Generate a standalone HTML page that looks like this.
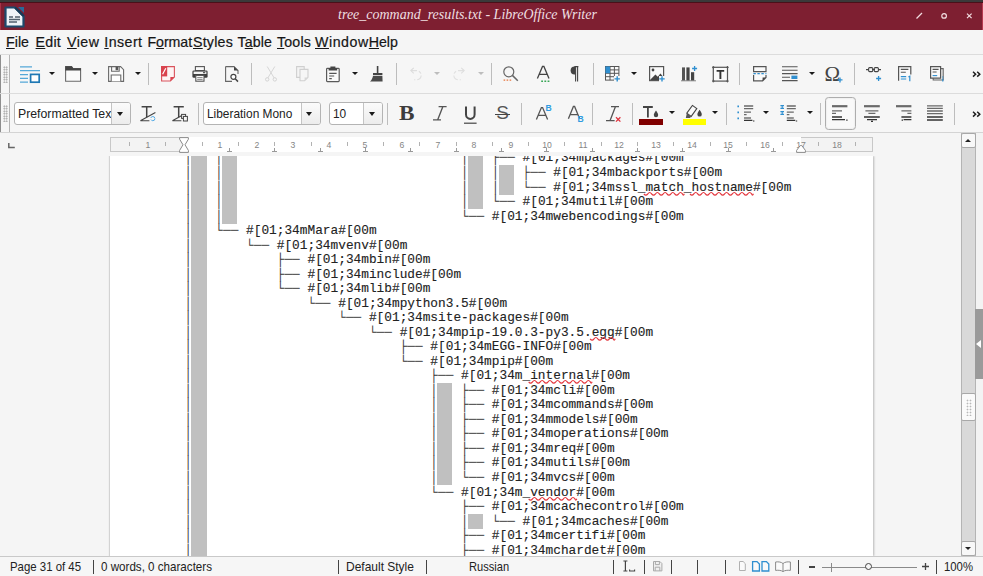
<!DOCTYPE html>
<html><head><meta charset="utf-8"><title>tree_command_results.txt - LibreOffice Writer</title>
<style>
html,body{margin:0;padding:0;}
body{width:983px;height:576px;overflow:hidden;position:relative;background:#f5f5f5;font-family:"Liberation Sans","DejaVu Sans",sans-serif;color:#222;}
#top{position:absolute;left:0;top:0;width:983px;height:3px;background:#3a3a3a;}
#top2{position:absolute;left:0;top:2px;width:983px;height:1px;background:#4a1019;}
#title{position:absolute;left:0;top:3px;width:983px;height:26.500px;background:#7e1f31;box-shadow:inset 1px 0 0 #a83348,inset -1px 0 0 #b53a50;}
#title .t{position:absolute;left:267.5px;top:-0.5px;width:400px;height:22px;line-height:22px;text-align:center;color:#efdfe1;font-family:"Liberation Serif","DejaVu Serif",serif;font-style:italic;font-size:15.200px;white-space:nowrap;}
#title .t b{display:inline-block;font-weight:normal;transform:scaleX(.921);transform-origin:50% 50%;}
#title .wc{position:absolute;top:4px;color:#e8d8da;font-size:11px;line-height:16px;}
#menu{position:absolute;left:0;top:29.500px;width:983px;height:24.500px;background:#f5f5f5;}
#menu span{position:absolute;top:2.8px;font-size:14.2px;line-height:20px;white-space:nowrap;color:#161616;-webkit-text-stroke:0.2px #161616;}
#menu u{text-decoration:underline;text-underline-offset:1.2px;text-decoration-thickness:1px;}
.tbar{position:absolute;left:0;width:983px;background:#f6f6f6;border-top:1px solid #dcdcdc;}
#tb1{top:54px;height:39px;}
#tb2{top:93px;height:38px;border-bottom:1px solid #d4d4d4;}
.grip{position:absolute;left:0;top:0;width:10px;height:100%;border-left:1.5px solid #8e8e8e;border-right:1px solid #b4b4b4;box-sizing:border-box;}
.grip:before{content:"";position:absolute;left:1.5px;top:11px;width:5px;height:17px;background-image:radial-gradient(#9a9a9a 0.7px,transparent 1px);background-size:2.5px 2.5px;}
.sep{position:absolute;width:1px;background:#bdbdbd;}
.ic{position:absolute;overflow:visible;}
.dd{position:absolute;width:0;height:0;margin-left:.5px;border-left:3px solid transparent;border-right:3px solid transparent;border-top:3.4px solid #1a1a1a;}
.dd.g{border-top-color:#bdbdbd;}
.combo{position:absolute;top:9px;height:22px;box-sizing:border-box;border:1px solid #b4b4b4;border-radius:3px;background:#fff;font-size:13px;line-height:20px;color:#222;overflow:hidden;white-space:nowrap;}
.combo .b{position:absolute;right:0;top:0;width:18px;height:100%;background:linear-gradient(#fbfbfb,#ececec);border-left:1px solid #c4c4c4;}
.combo .b:after{content:"";position:absolute;left:4.5px;top:8.5px;border-left:3.6px solid transparent;border-right:3.6px solid transparent;border-top:4px solid #1a1a1a;}
.combo .x{position:absolute;left:3.2px;top:0.5px;transform:scaleX(.915);transform-origin:0 50%;}
i{font-style:normal;display:block}
.gl{position:absolute;color:#3c3c3c;white-space:nowrap;}
.selbtn{position:absolute;box-sizing:border-box;border:1px solid #adadad;border-radius:3.5px;background:#f9f9f9;box-shadow:inset 0 0 2px rgba(0,0,0,.12);}
#rulerrow{position:absolute;left:0;top:133px;width:961px;height:23px;background:#f5f5f5;}
#ruler{position:absolute;left:110px;top:4px;width:763px;height:15px;background:#fff;}
#ruler .ml{position:absolute;left:0;top:0;width:73px;height:15px;box-sizing:border-box;border:1px solid #c8c8c8;border-right:none;background:#f3f3f3;}
#ruler .mr{position:absolute;left:691px;top:0;width:72px;height:15px;box-sizing:border-box;border:1px solid #c8c8c8;border-left:none;background:#f3f3f3;}
.rn{position:absolute;top:1.5px;width:20px;margin-left:-10px;text-align:center;font-size:9.6px;line-height:12px;color:#858585;transform:scaleX(.9);}
.rt{position:absolute;top:5px;width:1px;height:4px;margin-left:-.5px;background:#b2b2b2;}
.tb{position:absolute;top:11px;width:5px;height:4px;border-bottom:1px solid #9a9a9a;box-sizing:border-box;}
.tb:after{content:"";position:absolute;left:2px;top:0;width:1px;height:4px;background:#9a9a9a;}
#doc{position:absolute;left:0;top:156px;width:961px;height:400px;background:#f5f5f5;overflow:hidden;}
#page{position:absolute;left:110px;top:0;width:763px;height:400px;background:#fff;box-shadow:1px 0 2px rgba(0,0,0,.25),-1px 0 1px rgba(0,0,0,.12);}
.ln{position:absolute;left:184.6px;height:14.5px;line-height:14.5px;font-family:"Liberation Mono","DejaVu Sans Mono",monospace;font-size:12.8px;white-space:pre;color:#222;-webkit-text-stroke:0.12px #222;}
.bx{color:#383838;-webkit-text-stroke:0;}
.nb{background:#c0c0c0;position:relative;left:-1px;}
.wv{text-decoration:underline wavy #e03030;text-decoration-thickness:0.8px;text-underline-offset:2px;}
#vs{position:absolute;left:961px;top:133px;width:15px;height:423px;background:#d9d9d9;border-left:1px solid #b4b4b4;border-right:1px solid #b4b4b4;box-sizing:border-box;}
#vs .btn{position:absolute;left:-1px;width:15px;height:15px;background:#f8f8f8;border:1px solid #a8a8a8;border-radius:2px;box-sizing:border-box;}
#vs .btn:after{content:"";position:absolute;left:3px;top:4.5px;border-left:3.4px solid transparent;border-right:3.4px solid transparent;border-bottom:3.8px solid #222;}
#vs .btn.dn:after{border-bottom:none;border-top:3.8px solid #222;top:5px;}
#vs .thumb{position:absolute;left:-1px;top:259.5px;width:14.5px;height:28.500px;background:#fafafa;border:1px solid #a8a8a8;border-radius:2px;box-sizing:border-box;}
#vs .thumb:after{content:"";position:absolute;left:3.5px;top:5px;width:6px;height:17px;background-image:radial-gradient(#b8b8b8 0.8px,transparent 1.1px);background-size:3px 3px;}
#side{position:absolute;left:976px;top:133px;width:7px;height:423px;background:#f3f3f3;}
#side .h{position:absolute;left:-1px;top:176px;width:8px;height:70px;background:#9a9a9a;}
#side .h:after{content:"";position:absolute;left:1px;top:31px;border-top:4px solid transparent;border-bottom:4px solid transparent;border-right:5px solid #fff;}
#status{position:absolute;left:0;top:556px;width:983px;height:20px;background:#f6f6f6;border-top:1px solid #c9c9c9;box-sizing:border-box;font-size:12.4px;}
#status span{position:absolute;top:3px;line-height:15px;white-space:nowrap;color:#222;transform:scaleX(.925);transform-origin:0 50%;}
#status .s{position:absolute;top:3px;width:1px;height:14px;background:#444;}
</style></head><body>
<div id="top"></div><div id="top2"></div>
<div id="title">
<svg class="ic" style="left:4px;top:3px" width="21" height="22" viewBox="0 0 21 22"><path d="M1.5 1.5h9.500l8.500 8.500v10.500h-18z" fill="#eef3f8" stroke="#1d4a6c" stroke-width="2.2" stroke-linejoin="round"/><path d="M11 1.500l8.500 8.500z" stroke="#163a58" stroke-width="2.400"/><path d="M14 1l6 6v-6z" fill="#2a6a9a"/><path d="M5 11h4M11 11h5M5 13.5h11M5 16h8" stroke="#51606e" stroke-width="1.5"/></svg>
<div class="t"><b>tree_command_results.txt - LibreOffice Writer</b></div>
<svg class="ic" style="left:910px;top:7px" width="66" height="12" viewBox="0 0 66 12"><g fill="none" stroke="#f2dde0" stroke-width="1.2"><path d="M6.500 8.500l5.500-5.500"/><circle cx="34.100" cy="5.900" r="2.300"/><path d="M57 3.600l4.600 4.600M61.600 3.600l-4.600 4.600"/></g></svg>
</div>
<div id="menu">
<span style="left:6px;letter-spacing:0.03px"><u>F</u>ile</span><span style="left:35.6px;letter-spacing:0.24px"><u>E</u>dit</span><span style="left:67px;letter-spacing:0.5px"><u>V</u>iew</span><span style="left:104.3px;letter-spacing:0.44px"><u>I</u>nsert</span><span style="left:147.5px;letter-spacing:-0.07px">F<u>o</u>rmat</span><span style="left:193px;letter-spacing:0.23px"><u>S</u>tyles</span><span style="left:237.5px;letter-spacing:0.12px">T<u>a</u>ble</span><span style="left:277px;letter-spacing:0.18px"><u>T</u>ools</span><span style="left:315px;letter-spacing:0.56px"><u>W</u>indow</span><span style="left:368.8px;letter-spacing:-0.04px"><u>H</u>elp</span>
</div>
<div id="tb1" class="tbar"><div class="grip"></div>
<svg class="ic" style="left:19.7px;top:11.0px" width="20" height="17" viewBox="0 0 20 17"><path d="M0 0.8h12M0 4.6h20" stroke="#55a8d8" stroke-width="1.3"/><path d="M0 8.6h8M0 12.4h8M0 16.2h8" stroke="#55a8d8" stroke-width="1.3"/><rect x="10.6" y="8.4" width="8.6" height="7.8" fill="#fff" stroke="#1f78b4" stroke-width="1.7"/></svg>
<i class="dd" style="left:48.0px;top:16.5px"></i>
<svg class="ic" style="left:64.8px;top:11.0px" width="16.2" height="16" viewBox="0 0 16.2 16"><path d="M0.6 15.2V0.6h6l1.4 2h7.6v12.6z" fill="#fafafa" stroke="#6a6a6a" stroke-width="1.1"/><path d="M0.3 0.3h6.4l1.5 2h7.7v2.2h-15.6z" fill="#444"/></svg>
<i class="dd" style="left:91.0px;top:16.5px"></i>
<svg class="ic" style="left:108.3px;top:11.0px" width="16.2" height="16" viewBox="0 0 16.2 16"><path d="M0.6 0.6h12l3 3v11.8h-15z" fill="#fafafa" stroke="#6a6a6a" stroke-width="1.1"/><path d="M3.6 0.6v4.6h7.6v-4.6" fill="none" stroke="#6a6a6a" stroke-width="1.1"/><rect x="7.6" y="0.8" width="2.6" height="3.4" fill="#555"/><path d="M3.2 15.4v-6.4h9.6v6.4" fill="#fff" stroke="#6a6a6a" stroke-width="1.1"/></svg>
<i class="dd" style="left:134.0px;top:16.5px"></i>
<i class="sep" style="left:148.0px;top:8.0px;height:22.0px"></i>
<svg class="ic" style="left:161.0px;top:11.0px" width="14.2" height="16" viewBox="0 0 14.2 16"><path d="M5 0.6h8.4v10.4l-4 4h-8.8v-5" fill="#fdf4f4" stroke="#d9535c" stroke-width="1.1"/><path d="M13.4 11h-4v4z" fill="#d9434e"/><rect x="0" y="0" width="6.2" height="10.4" fill="#d9434e"/><path d="M1.6 8.2l3.2-6" stroke="#fff" stroke-width="1.2"/></svg>
<svg class="ic" style="left:192.0px;top:11.0px" width="16" height="16" viewBox="0 0 16 16"><rect x="3.4" y="0.6" width="9" height="4" fill="#fafafa" stroke="#555" stroke-width="1.1"/><rect x="0.4" y="4.4" width="15.2" height="7.4" rx="1.4" fill="#3e3e3e"/><rect x="1.6" y="5.6" width="12.8" height="2.4" fill="#f2f2f2"/><rect x="11" y="6.2" width="2.2" height="1" fill="#333"/><rect x="3.8" y="9.4" width="8.2" height="5.8" fill="#fafafa" stroke="#555" stroke-width="1.1"/><path d="M5.2 11.6h5.4M5.2 13.4h5.4" stroke="#777" stroke-width=".9"/></svg>
<svg class="ic" style="left:224.8px;top:11.0px" width="14" height="16" viewBox="0 0 14 16"><path d="M0.6 0.6h8.4l4 4v3.4M7 15.4h-6.4v-14.8" fill="none" stroke="#666" stroke-width="1.1"/><path d="M9 0.6l4 4h-4z" fill="#444"/><circle cx="8.4" cy="10.8" r="2.5" fill="#fff" stroke="#444" stroke-width="1.2"/><path d="M10.2 12.8l2.8 2.8" stroke="#444" stroke-width="1.5"/></svg>
<i class="sep" style="left:250.5px;top:8.0px;height:22.0px"></i>
<svg class="ic" style="left:264.7px;top:11.0px" width="12" height="16" viewBox="0 0 12 16"><path d="M2.2 0.5l7 11.5M9.8 0.5l-7 11.5" stroke="#d6d6d6" stroke-width="1" fill="none"/><circle cx="2.2" cy="13.4" r="1.7" fill="none" stroke="#d4d4d4" stroke-width="1"/><circle cx="9.8" cy="13.4" r="1.7" fill="none" stroke="#d4d4d4" stroke-width="1"/></svg>
<svg class="ic" style="left:296.0px;top:11.0px" width="12.6" height="15.4" viewBox="0 0 12.6 15.4"><path d="M0.6 0.6h7.6v10.8h-7.6z" fill="#f4f4f4" stroke="#cfcfcf" stroke-width="1.1"/><path d="M4 3.4h8v8l-3.4 3.4h-4.6z" fill="#f6f6f6" stroke="#cfcfcf" stroke-width="1.1"/><path d="M12 11.4h-3.4v3.4z" fill="#d6d6d6"/></svg>
<svg class="ic" style="left:326.0px;top:10.7px" width="13.8" height="16.3" viewBox="0 0 13.8 16.3"><rect x="0.6" y="2.4" width="12.6" height="13.2" rx="0.8" fill="#fafafa" stroke="#5a5a5a" stroke-width="1.2"/><path d="M2.6 4.6V2.2h1.8v-1.6h5v1.6h1.8v2.4z" fill="#444"/><path d="M3.2 7.4h7.4M3.2 10h5M3.2 12.6h2.6" stroke="#555" stroke-width="1.1"/></svg>
<i class="dd" style="left:351.1px;top:16.5px"></i>
<svg class="ic" style="left:370.0px;top:11.0px" width="12.8" height="15.8" viewBox="0 0 12.8 15.8"><path d="M7.6 0v7.4" stroke="#444" stroke-width="1.6"/><path d="M3 7h9.4v2.2h-9.4z" fill="#444"/><path d="M3 10h9.4l0.2 5.6h-12.6c1.6-1.4 2.6-3.4 3-5.6z" fill="#4a4a4a"/></svg>
<i class="sep" style="left:396.2px;top:8.0px;height:22.0px"></i>
<svg class="ic" style="left:410.0px;top:11.5px" width="12" height="14" viewBox="0 0 12 14"><path d="M1 3.6h5.6a4.6 4.6 0 0 1 0 9.2h-2.4" fill="none" stroke="#dedede" stroke-width="1.1" stroke-dasharray="6 2 3 2"/><path d="M3.8 0.8l-3 2.8 3 2.8" fill="none" stroke="#dcdcdc" stroke-width="1.1"/></svg>
<i class="dd g" style="left:433.5px;top:16.5px"></i>
<svg class="ic" style="left:453.0px;top:11.5px" width="12" height="14" viewBox="0 0 12 14"><path d="M11 3.6h-5.6a4.6 4.6 0 0 0 0 9.2h2.4" fill="none" stroke="#e0e0e0" stroke-width="1.1" stroke-dasharray="6 2 3 2"/><path d="M8.2 0.8l3 2.8-3 2.8" fill="none" stroke="#dedede" stroke-width="1.1"/></svg>
<i class="dd g" style="left:477.0px;top:16.5px"></i>
<i class="sep" style="left:490.5px;top:8.0px;height:22.0px"></i>
<svg class="ic" style="left:503.0px;top:11.2px" width="15.4" height="15.4" viewBox="0 0 15.4 15.4"><circle cx="5.8" cy="5.8" r="5" fill="none" stroke="#666" stroke-width="1.2"/><path d="M9.4 9.4l5.4 5.4" stroke="#666" stroke-width="1.5"/><path d="M0.6 14.2h8" stroke="#e8743b" stroke-width="1.3" stroke-dasharray="1.6 1.4"/></svg>
<svg class="ic" style="left:536.5px;top:11.2px" width="12.8" height="16" viewBox="0 0 12.8 16"><path d="M0.4 12.6l5.1-12.2h1.4l5.1 12.2M2.4 8.4h7.6" fill="none" stroke="#444" stroke-width="1.3"/><path d="M4.2 15.2h8.4" stroke="#3aa757" stroke-width="1.4" stroke-dasharray="1.8 1.4"/></svg>
<svg class="ic" style="left:570.0px;top:11.2px" width="8.6" height="15.6" viewBox="0 0 8.6 15.6"><path d="M4.6 8.4a4 4 0 0 1 0-8h0.6v8z" fill="#444"/><path d="M5.6 0.6v14.8M7.6 0.6v14.8M4.4 0.6h4" stroke="#444" stroke-width="1.1" fill="none"/></svg>
<i class="sep" style="left:593.3px;top:8.0px;height:22.0px"></i>
<svg class="ic" style="left:605.2px;top:11.2px" width="15" height="16" viewBox="0 0 15 16"><rect x="0.5" y="0.5" width="13.4" height="13.6" fill="#fafafa" stroke="#555" stroke-width="1"/><path d="M0.5 3.9h13.4M0.5 7.3h13.4M0.5 10.7h13.4M5 0.5v13.6M9.4 0.5v13.6" stroke="#555" stroke-width="1"/><rect x="0.4" y="0.4" width="4.6" height="6.9" fill="#2f8fd0"/><rect x="9" y="10" width="6" height="6" fill="#f6f6f6"/><path d="M12.2 10.2v5.4M9.5 12.9h5.4" stroke="#2f8fd0" stroke-width="1.4"/></svg>
<i class="dd" style="left:630.7px;top:16.5px"></i>
<svg class="ic" style="left:649.0px;top:11.2px" width="16" height="16" viewBox="0 0 16 16"><rect x="0.6" y="0.6" width="14" height="14" fill="#fafafa" stroke="#555" stroke-width="1.2"/><circle cx="4" cy="4" r="1.4" fill="#444"/><path d="M1 14l5.4-5.6 2.4 2.4 2.6-3.4 3 3.6v3z" fill="#444"/><rect x="10" y="10" width="6" height="6" fill="#f6f6f6"/><path d="M13 10.2v5.4M10.3 12.9h5.4" stroke="#2f8fd0" stroke-width="1.4"/></svg>
<svg class="ic" style="left:680.7px;top:10.5px" width="16.4" height="15.4" viewBox="0 0 16.4 15.4"><path d="M0 14.8h15" stroke="#777" stroke-width=".9"/><rect x="1" y="1.4" width="3" height="13" fill="#555"/><rect x="5.4" y="1.4" width="3.2" height="13" fill="#444"/><rect x="10" y="6.2" width="3.2" height="8.2" fill="#444"/><path d="M13.6 0v5M11.1 2.5h5" stroke="#2f8fd0" stroke-width="1.3"/></svg>
<svg class="ic" style="left:711.8px;top:10.5px" width="16.8" height="16.4" viewBox="0 0 16.8 16.4"><rect x="1.3" y="1.3" width="14.2" height="13.8" fill="#fafafa" stroke="#555" stroke-width="1.2"/><path d="M0 1.3h2.6M1.3 0v2.6M14.2 1.3h2.6M15.5 0v2.6M0 15.1h2.6M1.3 13.8v2.6M14.2 15.1h2.6M15.5 13.8v2.6" stroke="#555" stroke-width="1"/><path d="M4.6 4.9h7.6M8.4 4.9v8" stroke="#333" stroke-width="1.9"/></svg>
<i class="sep" style="left:739.0px;top:8.0px;height:22.0px"></i>
<svg class="ic" style="left:752.5px;top:11.2px" width="13.8" height="15.6" viewBox="0 0 13.8 15.6"><path d="M0.6 5.600v-5h12.4v5z" fill="#fafafa" stroke="#555" stroke-width="1.2"/><path d="M0.4 7.6h13" stroke="#2f8fd0" stroke-width="1.2" stroke-dasharray="2.4 1.6"/><path d="M0.6 9v5.8h9l3.4-3.4v-2.4" fill="#fafafa" stroke="#555" stroke-width="1.2"/><path d="M13 11.4h-3.4v3.4z" fill="#444"/></svg>
<svg class="ic" style="left:782.2px;top:11.2px" width="15.6" height="15.4" viewBox="0 0 15.6 15.4"><path d="M0 0.8h15.6M0 4.2h15.6M0 7.6h15.6M0 11.2h8M0 14.6h15.6" stroke="#555" stroke-width="1.1"/><rect x="9.4" y="9.6" width="6" height="3.4" fill="#2f8fd0"/></svg>
<i class="dd" style="left:808.1px;top:16.5px"></i>
<svg class="ic" style="left:825.0px;top:11.2px" width="18" height="17" viewBox="0 0 18 17"><text x="-0.5" y="14.6" font-family="Liberation Serif,DejaVu Serif,serif" font-size="21" fill="#444">&#937;</text><path d="M15 11.4v5M12.5 13.9h5" stroke="#2f8fd0" stroke-width="1.3"/></svg>
<i class="sep" style="left:853.7px;top:8.0px;height:22.0px"></i>
<svg class="ic" style="left:866.0px;top:11.4px" width="16" height="15.6" viewBox="0 0 16 15.6"><path d="M0 3.6h2.6M12.4 3.6h2.6" stroke="#444" stroke-width="1.1"/><rect x="2.6" y="1.6" width="4.2" height="4" rx="1" fill="none" stroke="#444" stroke-width="1.1"/><rect x="8.2" y="1.6" width="4.2" height="4" rx="1" fill="none" stroke="#444" stroke-width="1.1"/><path d="M6 3.6h3" stroke="#444" stroke-width="1.1"/><path d="M12.6 10v5M10.1 12.5h5" stroke="#2f8fd0" stroke-width="1.3"/></svg>
<svg class="ic" style="left:898.3px;top:11.2px" width="13.8" height="15.6" viewBox="0 0 13.8 15.6"><path d="M0.6 14.8v-14.2h12.2v8" fill="#fafafa" stroke="#555" stroke-width="1.2"/><path d="M2.8 3.4h7.6M2.8 6.2h5" stroke="#555" stroke-width="1.1"/><path d="M2.8 10.6h5.4M2.8 13h5.4" stroke="#2f8fd0" stroke-width="1.1"/><path d="M10.4 11l1.4-.8v5" stroke="#2f8fd0" stroke-width="1.2" fill="none"/></svg>
<svg class="ic" style="left:930.0px;top:11.2px" width="14.4" height="15.8" viewBox="0 0 14.4 15.8"><path d="M3.2 2.6h10v11.4h-10z" fill="#eee" stroke="#666" stroke-width="1.1"/><path d="M0.6 0.6h10v11.6h-10z" fill="#fafafa" stroke="#555" stroke-width="1.2"/><path d="M2.6 3.4h6M2.6 6h4" stroke="#555" stroke-width="1.1"/><path d="M2.6 9.6h4.6" stroke="#2f8fd0" stroke-width="1.1"/><path d="M12.8 10.4v1M12.8 12.4v3.2" stroke="#2f8fd0" stroke-width="1.2"/></svg>
<svg class="ic" style="left:971.6px;top:16.0px" width="9" height="6.4" viewBox="0 0 9 6.4"><path d="M1 0.8l2.6 2.4L1 5.6M5.2 0.8l2.6 2.4-2.6 2.4" fill="none" stroke="#1e1e1e" stroke-width="1.5"/></svg>
</div>
<div id="tb2" class="tbar"><div class="grip"></div>
<div class="combo" style="left:14px;width:117px;top:8.3px;height:23px"><div style="position:absolute;left:0;top:0;width:95.5px;height:100%;overflow:hidden"><span class="x" style="transform:scaleX(.945)">Preformatted Text</span></div><i class="b"></i></div>
<svg class="ic" style="left:139.7px;top:11.6px" width="16" height="16" viewBox="0 0 16 16"><path d="M1.6 0.8h10.2M6.7 0.8v10.4" stroke="#444" stroke-width="1.5" fill="none"/><path d="M0.4 14.8l15-8.2M0.4 14.8h9" stroke="#444" stroke-width="1.1" fill="none"/><circle cx="12.8" cy="12.6" r="2.1" fill="#f6f6f6" stroke="#52aae6" stroke-width="1" stroke-dasharray="5 1.6"/></svg>
<svg class="ic" style="left:171.6px;top:11.6px" width="16" height="16" viewBox="0 0 16 16"><path d="M1.6 0.8h10.2M6.7 0.8v10.4" stroke="#444" stroke-width="1.5" fill="none"/><path d="M0.4 14.8l9-5M0.4 14.8h9" stroke="#444" stroke-width="1.1" fill="none"/><rect x="9.6" y="8.4" width="4" height="4" fill="#f6f6f6" stroke="#444" stroke-width="1"/><rect x="11.4" y="10.4" width="4" height="4.6" fill="#f6f6f6" stroke="#444" stroke-width="1"/></svg>
<i class="sep" style="left:198.1px;top:9.0px;height:21.6px"></i>
<div class="combo" style="left:202.5px;width:118px;top:8.3px;height:23px"><span class="x">Liberation Mono</span><i class="b"></i></div>
<div class="combo" style="left:328.5px;width:54.5px;top:8.3px;height:23px"><span class="x">10</span><i class="b"></i></div>
<i class="sep" style="left:387.0px;top:9.0px;height:21.6px"></i>
<span class="gl" style="left:399.2px;top:7.8px;font:bold 21.5px/22px 'Liberation Serif','DejaVu Serif',serif;transform:scaleX(1.08);transform-origin:0 50%">B</span>
<svg class="ic" style="left:432.6px;top:12.0px" width="14" height="14.6" viewBox="0 0 14 14.6"><path d="M5.6 0.7h8M0 13.900h8M9.800 0.700l-5.200 13.200" fill="none" stroke="#555" stroke-width="1.35"/></svg>
<svg class="ic" style="left:464.4px;top:12.4px" width="12.8" height="18" viewBox="0 0 12.8 18"><path d="M2 0.6v8a4.2 4.2 0 0 0 8.6 0v-8" fill="none" stroke="#444" stroke-width="2"/><path d="M0 17.2h12.6" stroke="#444" stroke-width="1.2"/></svg>
<span class="gl" style="left:496.2px;top:8.2px;font:19px/22px 'Liberation Sans','DejaVu Sans',sans-serif;color:#555">S</span>
<i class="sep" style="left:494.5px;top:19.6px;width:15.4px;height:1.3px;background:#444"></i>
<i class="sep" style="left:521.0px;top:9.0px;height:21.6px"></i>
<svg class="ic" style="left:535.6px;top:11.0px" width="16" height="15" viewBox="0 0 16 15"><path d="M0.4 14.6l5-12h1.2l5 12M2.4 10.4h7.4" fill="none" stroke="#555" stroke-width="1.3"/><text x="9.6" y="5.6" font-family="Liberation Sans,DejaVu Sans,sans-serif" font-size="8.6" font-weight="bold" fill="#2f9be0">B</text></svg>
<svg class="ic" style="left:567.6px;top:12.0px" width="16" height="17" viewBox="0 0 16 17"><path d="M0.4 12.8l5-12.4h1.2l5 12.4M2.4 8.6h7.4" fill="none" stroke="#555" stroke-width="1.3"/><text x="9.4" y="16.4" font-family="Liberation Sans,DejaVu Sans,sans-serif" font-size="8.6" font-weight="bold" fill="#2f9be0">B</text></svg>
<i class="sep" style="left:592.3px;top:9.0px;height:21.6px"></i>
<svg class="ic" style="left:606.0px;top:11.6px" width="15" height="16.4" viewBox="0 0 15 16.4"><path d="M5 0.7h8M0 14.6h8.6M9.4 0.7l-5.4 14" fill="none" stroke="#555" stroke-width="1.3"/><path d="M10 11.2l4.4 4.4M14.4 11.2l-4.4 4.4" stroke="#e0343f" stroke-width="1.3"/></svg>
<i class="sep" style="left:631.9px;top:9.0px;height:21.6px"></i>
<svg class="ic" style="left:643.2px;top:11.8px" width="16" height="12" viewBox="0 0 16 12"><path d="M0 1h9.8M4.9 1v10.6" stroke="#444" stroke-width="1.8" fill="none"/><path d="M13 4.4c1.2 1.8 2.2 3.2 2.2 4.6a2.2 2.2 0 0 1-4.4 0c0-1.4 1-2.8 2.2-4.6z" fill="#444"/></svg>
<i class="sep" style="left:639.3px;top:25.2px;width:23.4px;height:5.4px;background:#800000"></i>
<i class="dd" style="left:668.8px;top:16.5px"></i>
<svg class="ic" style="left:686.4px;top:11.4px" width="17" height="13.4" viewBox="0 0 17 13.4"><path d="M6.4 0.4l4.4 3.2-5.6 7.8-4.4-3.2z" fill="#fafafa" stroke="#444" stroke-width="1.1"/><path d="M0.8 8.2l4.4 3.2-1.2 1.6h-4.2z" fill="#555"/><path d="M13.6 4.8c1.2 1.8 2.2 3.2 2.2 4.6a2.2 2.2 0 0 1-4.4 0c0-1.4 1-2.8 2.2-4.6z" fill="#444"/></svg>
<i class="sep" style="left:682.5px;top:25.2px;width:23.3px;height:5.4px;background:#ffff00"></i>
<i class="dd" style="left:711.9px;top:16.5px"></i>
<i class="sep" style="left:725.7px;top:9.0px;height:21.6px"></i>
<svg class="ic" style="left:737.0px;top:10.6px" width="18" height="17" viewBox="0 0 18 17"><path d="M1.2 0v1.6M1.2 6v1.6M1.2 12v1.6" stroke="#2f8fd0" stroke-width="1.6" transform="translate(0,0.6)"/><path d="M7 1h9.2M7 3.6h9.2" stroke="#6a6a6a" stroke-width="1.3"/><path d="M7 7.2h7M7 9.6h2.6" stroke="#6a6a6a" stroke-width="1.2"/><path d="M7 13h7M7 15.4h8.4M16 16h1.4" stroke="#333" stroke-width="1.2"/></svg>
<i class="dd" style="left:762.7px;top:16.5px"></i>
<svg class="ic" style="left:780.0px;top:10.6px" width="18" height="17" viewBox="0 0 18 17"><path d="M0.4 0.6h3.6M0.4 3.4h3.6M2.2 0.6v2.8M0.4 6.6h3.6M0.4 9.4h3.6M2.2 6.6v2.8" stroke="#2f8fd0" stroke-width="1.1"/><path d="M6.8 1h9M6.8 3.6h9" stroke="#6a6a6a" stroke-width="1.3"/><path d="M6.8 7.2h7M6.8 9.6h2.6" stroke="#6a6a6a" stroke-width="1.2"/><path d="M6.8 13h7M6.8 15.4h8.4M15.8 16h1.4" stroke="#333" stroke-width="1.2"/></svg>
<i class="dd" style="left:806.1px;top:16.5px"></i>
<i class="sep" style="left:819.7px;top:9.0px;height:21.6px"></i>
<i class="selbtn" style="left:824.8px;top:3.3px;width:31.4px;height:33px"></i>
<svg class="ic" style="left:832.0px;top:11.0px" width="16" height="16.4" viewBox="0 0 16 16.4"><path d="M0 1.2h15.4" stroke="#6a6a6a" stroke-width="2.2"/><path d="M0 5.8h10M0 8.4h4" stroke="#6a6a6a" stroke-width="1.3"/><path d="M0 12h10M0 14.6h13M14.2 15.2h1.4" stroke="#333" stroke-width="1.3"/></svg>
<svg class="ic" style="left:863.7px;top:11.0px" width="16" height="17" viewBox="0 0 16 17"><path d="M0 1.2h15.8" stroke="#6a6a6a" stroke-width="2.2"/><path d="M1.4 5.8h13M4.4 8.4h7" stroke="#6a6a6a" stroke-width="1.3"/><path d="M0 12h15.8M3 14.6h10M7 16.4h2" stroke="#333" stroke-width="1.3"/></svg>
<svg class="ic" style="left:895.6px;top:11.0px" width="16" height="16.4" viewBox="0 0 16 16.4"><path d="M0 1.2h15.4" stroke="#6a6a6a" stroke-width="2.2"/><path d="M5.4 5.8h10M11.4 8.4h4" stroke="#6a6a6a" stroke-width="1.3"/><path d="M5.4 12h10M7.6 14.6h7.8M5.6 15.2h1.4" stroke="#333" stroke-width="1.3"/></svg>
<svg class="ic" style="left:927.0px;top:11.4px" width="16" height="16" viewBox="0 0 16 16"><path d="M0 0.8h15.8M0 3.4h15.8M0 6h15.8M0 8.6h15.8" stroke="#6a6a6a" stroke-width="1.3"/><path d="M0 12h15.8M0 15h15.8" stroke="#333" stroke-width="1.3"/></svg>
<i class="sep" style="left:953.9px;top:9.0px;height:21.6px"></i>
<svg class="ic" style="left:972.0px;top:16.6px" width="9" height="6.4" viewBox="0 0 9 6.4"><path d="M1 0.8l2.6 2.4L1 5.6M5.2 0.8l2.6 2.4-2.6 2.4" fill="none" stroke="#1e1e1e" stroke-width="1.5"/></svg>
</div>
<div id="rulerrow"><svg class="ic" style="left:8px;top:9.5px" width="7" height="6" viewBox="0 0 7 6"><path d="M0.8 0v4.600h6" fill="none" stroke="#666" stroke-width="1.5"/></svg><div id="ruler"><div class="ml"></div><div class="mr"></div>
<span class="rn" style="left:110.3px">1</span>
<i class="rt" style="left:92.1px"></i>
<span class="rn" style="left:146.6px">2</span>
<i class="rt" style="left:128.4px"></i>
<span class="rn" style="left:182.8px">3</span>
<i class="rt" style="left:164.7px"></i>
<span class="rn" style="left:219.1px">4</span>
<i class="rt" style="left:201.0px"></i>
<span class="rn" style="left:255.4px">5</span>
<i class="rt" style="left:237.3px"></i>
<span class="rn" style="left:291.7px">6</span>
<i class="rt" style="left:273.5px"></i>
<span class="rn" style="left:328.0px">7</span>
<i class="rt" style="left:309.8px"></i>
<span class="rn" style="left:364.2px">8</span>
<i class="rt" style="left:346.1px"></i>
<span class="rn" style="left:400.5px">9</span>
<i class="rt" style="left:382.4px"></i>
<span class="rn" style="left:436.8px">10</span>
<i class="rt" style="left:418.7px"></i>
<span class="rn" style="left:473.1px">11</span>
<i class="rt" style="left:454.9px"></i>
<span class="rn" style="left:509.4px">12</span>
<i class="rt" style="left:491.2px"></i>
<span class="rn" style="left:545.6px">13</span>
<i class="rt" style="left:527.5px"></i>
<span class="rn" style="left:581.9px">14</span>
<i class="rt" style="left:563.8px"></i>
<span class="rn" style="left:618.2px">15</span>
<i class="rt" style="left:600.1px"></i>
<span class="rn" style="left:654.5px">16</span>
<i class="rt" style="left:636.3px"></i>
<span class="rn" style="left:690.8px">17</span>
<i class="rt" style="left:672.6px"></i>
<span class="rn" style="left:727.0px">18</span>
<i class="rt" style="left:708.9px"></i>
<span class="rn" style="left:37.7px">1</span>
<i class="rt" style="left:55.9px"></i>
<i class="rt" style="left:19.6px"></i>
<i class="rt" style="left:745.2px"></i>
<i class="tb" style="left:116.8px"></i>
<i class="tb" style="left:162.2px"></i>
<i class="tb" style="left:207.6px"></i>
<i class="tb" style="left:252.9px"></i>
<i class="tb" style="left:298.2px"></i>
<i class="tb" style="left:343.6px"></i>
<i class="tb" style="left:388.9px"></i>
<i class="tb" style="left:434.3px"></i>
<i class="tb" style="left:479.7px"></i>
<i class="tb" style="left:525.0px"></i>
<i class="tb" style="left:570.4px"></i>
<i class="tb" style="left:615.7px"></i>
<i class="tb" style="left:661.1px"></i>
<svg class="ic" style="left:68.6px;top:-0.5px" width="10" height="16" viewBox="0 0 10 16"><path d="M0.6 0.6h8.800v1.600l-3.400 5.600 3.400 5.600v2h-8.800v-2l3.400-5.600-3.400-5.600z" fill="#fff" stroke="#8a8a8a" stroke-width="1"/></svg>
<svg class="ic" style="left:686.4px;top:7.5px" width="10" height="8" viewBox="0 0 10 8"><path d="M0.600 7.400v-2l3.600-4.800h1.600l3.600 4.800v2z" fill="#fff" stroke="#8a8a8a" stroke-width="1"/></svg>
</div></div>
<div id="doc"><div id="page"></div>
<div class="ln" style="top:-4.75px"><span class="bx">│</span><span class="nb">&nbsp;&nbsp;</span> <span class="bx">│</span><span class="nb">&nbsp;&nbsp;</span>                             <span class="bx">│</span><span class="nb">&nbsp;&nbsp;</span> <span class="bx">├── </span>#[01;34mpackages#[00m</div>
<div class="ln" style="top:10.25px"><span class="bx">│</span><span class="nb">&nbsp;&nbsp;</span> <span class="bx">│</span><span class="nb">&nbsp;&nbsp;</span>                             <span class="bx">│</span><span class="nb">&nbsp;&nbsp;</span> <span class="bx">│</span><span class="nb">&nbsp;&nbsp;</span> <span class="bx">├── </span>#[01;34mbackports#[00m</div>
<div class="ln" style="top:25.25px"><span class="bx">│</span><span class="nb">&nbsp;&nbsp;</span> <span class="bx">│</span><span class="nb">&nbsp;&nbsp;</span>                             <span class="bx">│</span><span class="nb">&nbsp;&nbsp;</span> <span class="bx">│</span><span class="nb">&nbsp;&nbsp;</span> <span class="bx">└── </span>#[01;34mssl_match_hostname#[00m</div>
<div class="ln" style="top:39.25px"><span class="bx">│</span><span class="nb">&nbsp;&nbsp;</span> <span class="bx">│</span><span class="nb">&nbsp;&nbsp;</span>                             <span class="bx">│</span><span class="nb">&nbsp;&nbsp;</span> <span class="bx">└── </span>#[01;34mutil#[00m</div>
<div class="ln" style="top:54.25px"><span class="bx">│</span><span class="nb">&nbsp;&nbsp;</span> <span class="bx">│</span><span class="nb">&nbsp;&nbsp;</span>                             <span class="bx">└── </span>#[01;34mwebencodings#[00m</div>
<div class="ln" style="top:68.25px"><span class="bx">│</span><span class="nb">&nbsp;&nbsp;</span> <span class="bx">└── </span>#[01;34mMara#[00m</div>
<div class="ln" style="top:83.25px"><span class="bx">│</span><span class="nb">&nbsp;&nbsp;</span>     <span class="bx">└── </span>#[01;34mvenv#[00m</div>
<div class="ln" style="top:97.25px"><span class="bx">│</span><span class="nb">&nbsp;&nbsp;</span>         <span class="bx">├── </span>#[01;34mbin#[00m</div>
<div class="ln" style="top:112.25px"><span class="bx">│</span><span class="nb">&nbsp;&nbsp;</span>         <span class="bx">├── </span>#[01;34minclude#[00m</div>
<div class="ln" style="top:126.25px"><span class="bx">│</span><span class="nb">&nbsp;&nbsp;</span>         <span class="bx">└── </span>#[01;34mlib#[00m</div>
<div class="ln" style="top:141.25px"><span class="bx">│</span><span class="nb">&nbsp;&nbsp;</span>             <span class="bx">└── </span>#[01;34mpython3.5#[00m</div>
<div class="ln" style="top:155.25px"><span class="bx">│</span><span class="nb">&nbsp;&nbsp;</span>                 <span class="bx">└── </span>#[01;34msite-packages#[00m</div>
<div class="ln" style="top:170.25px"><span class="bx">│</span><span class="nb">&nbsp;&nbsp;</span>                     <span class="bx">└── </span>#[01;34mpip-19.0.3-py3.5.egg#[00m</div>
<div class="ln" style="top:184.25px"><span class="bx">│</span><span class="nb">&nbsp;&nbsp;</span>                         <span class="bx">├── </span>#[01;34mEGG-INFO#[00m</div>
<div class="ln" style="top:199.25px"><span class="bx">│</span><span class="nb">&nbsp;&nbsp;</span>                         <span class="bx">└── </span>#[01;34mpip#[00m</div>
<div class="ln" style="top:213.25px"><span class="bx">│</span><span class="nb">&nbsp;&nbsp;</span>                             <span class="bx">├── </span>#[01;34m_internal#[00m</div>
<div class="ln" style="top:228.25px"><span class="bx">│</span><span class="nb">&nbsp;&nbsp;</span>                             <span class="bx">│</span><span class="nb">&nbsp;&nbsp;</span> <span class="bx">├── </span>#[01;34mcli#[00m</div>
<div class="ln" style="top:242.25px"><span class="bx">│</span><span class="nb">&nbsp;&nbsp;</span>                             <span class="bx">│</span><span class="nb">&nbsp;&nbsp;</span> <span class="bx">├── </span>#[01;34mcommands#[00m</div>
<div class="ln" style="top:257.25px"><span class="bx">│</span><span class="nb">&nbsp;&nbsp;</span>                             <span class="bx">│</span><span class="nb">&nbsp;&nbsp;</span> <span class="bx">├── </span>#[01;34mmodels#[00m</div>
<div class="ln" style="top:271.25px"><span class="bx">│</span><span class="nb">&nbsp;&nbsp;</span>                             <span class="bx">│</span><span class="nb">&nbsp;&nbsp;</span> <span class="bx">├── </span>#[01;34moperations#[00m</div>
<div class="ln" style="top:286.25px"><span class="bx">│</span><span class="nb">&nbsp;&nbsp;</span>                             <span class="bx">│</span><span class="nb">&nbsp;&nbsp;</span> <span class="bx">├── </span>#[01;34mreq#[00m</div>
<div class="ln" style="top:300.25px"><span class="bx">│</span><span class="nb">&nbsp;&nbsp;</span>                             <span class="bx">│</span><span class="nb">&nbsp;&nbsp;</span> <span class="bx">├── </span>#[01;34mutils#[00m</div>
<div class="ln" style="top:315.25px"><span class="bx">│</span><span class="nb">&nbsp;&nbsp;</span>                             <span class="bx">│</span><span class="nb">&nbsp;&nbsp;</span> <span class="bx">└── </span>#[01;34mvcs#[00m</div>
<div class="ln" style="top:330.25px"><span class="bx">│</span><span class="nb">&nbsp;&nbsp;</span>                             <span class="bx">└── </span>#[01;34m_vendor#[00m</div>
<div class="ln" style="top:344.25px"><span class="bx">│</span><span class="nb">&nbsp;&nbsp;</span>                                 <span class="bx">├── </span>#[01;34mcachecontrol#[00m</div>
<div class="ln" style="top:359.25px"><span class="bx">│</span><span class="nb">&nbsp;&nbsp;</span>                                 <span class="bx">│</span><span class="nb">&nbsp;&nbsp;</span> <span class="bx">└── </span>#[01;34mcaches#[00m</div>
<div class="ln" style="top:373.25px"><span class="bx">│</span><span class="nb">&nbsp;&nbsp;</span>                                 <span class="bx">├── </span>#[01;34mcertifi#[00m</div>
<div class="ln" style="top:388.25px"><span class="bx">│</span><span class="nb">&nbsp;&nbsp;</span>                                 <span class="bx">├── </span>#[01;34mchardet#[00m</div>
<div class="ln" style="top:402.25px"><span class="bx">│</span><span class="nb">&nbsp;&nbsp;</span>                                 <span class="bx">├── </span>#[01;34midna#[00m</div>
<svg class="ic" style="left:0;top:-156px" width="961" height="576" viewBox="0 0 961 576"><g fill="none" stroke="#e3343b" stroke-width="1.15"><path d="M643.9 193.8Q645.8 196.4 647.8 193.8Q649.7 191.2 651.6 193.8Q653.5 196.4 655.5 193.8Q657.4 191.2 659.3 193.8Q661.2 196.4 663.2 193.8Q665.1 191.2 667.0 193.8Q668.9 196.4 670.9 193.8Q672.8 191.2 674.7 193.8Q676.6 196.4 678.6 193.8Q680.5 191.2 682.4 193.8Q683.4 196.4 684.3 193.8"/><path d="M690.0 193.8Q691.9 196.4 693.8 193.8Q695.8 191.2 697.7 193.8Q699.6 196.4 701.5 193.8Q703.5 191.2 705.4 193.8Q707.3 196.4 709.2 193.8Q711.2 191.2 713.1 193.8Q715.0 196.4 716.9 193.8Q718.9 191.2 720.8 193.8Q722.7 196.4 724.6 193.8Q726.6 191.2 728.5 193.8Q730.4 196.4 732.3 193.8Q734.3 191.2 736.2 193.8Q738.1 196.4 740.0 193.8Q742.0 191.2 743.9 193.8Q745.8 196.4 747.7 193.8Q749.7 191.2 751.6 193.8Q752.5 196.4 753.4 193.8"/><path d="M590.1 338.8Q592.1 341.4 594.0 338.8Q595.9 336.2 597.8 338.8Q599.8 341.4 601.7 338.8Q603.6 336.2 605.5 338.8Q607.5 341.4 609.4 338.8Q611.3 336.2 613.2 338.8Q614.2 341.4 615.2 338.8"/><path d="M528.7 381.8Q530.6 384.4 532.5 381.8Q534.5 379.2 536.4 381.8Q538.3 384.4 540.2 381.8Q542.2 379.2 544.1 381.8Q546.0 384.4 548.0 381.8Q549.9 379.2 551.8 381.8Q553.7 384.4 555.7 381.8Q557.6 379.2 559.5 381.8Q561.4 384.4 563.4 381.8Q565.3 379.2 567.2 381.8Q569.1 384.4 571.1 381.8Q573.0 379.2 574.9 381.8Q576.8 384.4 578.8 381.8Q580.7 379.2 582.6 381.8Q584.5 384.4 586.5 381.8Q588.4 379.2 590.3 381.8Q591.2 384.4 592.1 381.8"/><path d="M528.7 498.8Q530.6 501.4 532.5 498.8Q534.5 496.2 536.4 498.8Q538.3 501.4 540.2 498.8Q542.2 496.2 544.1 498.8Q546.0 501.4 548.0 498.8Q549.9 496.2 551.8 498.8Q553.7 501.4 555.7 498.8Q557.6 496.2 559.5 498.8Q561.4 501.4 563.4 498.8Q565.3 496.2 567.2 498.8Q569.1 501.4 571.1 498.8Q573.0 496.2 574.9 498.8Q575.8 501.4 576.8 498.8"/></g></svg>
</div>
<div id="vs"><div class="btn" style="top:0"></div><div class="thumb"></div><div class="btn dn" style="top:407.5px"></div></div>
<div id="side"><div class="h"></div></div>
<div id="status">
<span style="left:10px;transform:scaleX(.92)">Page 31 of 45</span>
<i class="s" style="left:92.7px"></i>
<span style="left:101px;transform:scaleX(.937)">0 words, 0 characters</span>
<i class="s" style="left:337.8px"></i>
<span style="left:346px;transform:scaleX(.967)">Default Style</span>
<i class="s" style="left:425.8px"></i>
<span style="left:469px;transform:scaleX(.895)">Russian</span>
<i class="s" style="left:613.3px"></i>
<svg class="ic" style="left:621.6px;top:3.0px" width="14" height="12" viewBox="0 0 14 12"><path d="M1.4 1h4M1.4 11h4M3.4 1v10" stroke="#444" stroke-width="1.2" fill="none"/><path d="M7.6 9.6v1.4h5v-1.4" stroke="#444" stroke-width="1.1" fill="none"/></svg>
<i class="s" style="left:643.5px"></i>
<svg class="ic" style="left:652.6px;top:3.6px" width="10" height="11" viewBox="0 0 10 11"><path d="M0.5 0.5h6.4l2 2v7.4h-8.4z" fill="#f0f0f0" stroke="#aaa" stroke-width="1"/><path d="M2.4 0.6v3h4v-3M2.2 9.8v-3.6h4.6v3.6" fill="none" stroke="#aaa" stroke-width="1"/></svg>
<i class="s" style="left:670.5px"></i>
<i class="s" style="left:697.2px"></i>
<i class="s" style="left:725.2px"></i>
<svg class="ic" style="left:738.6px;top:4.4px" width="7" height="10" viewBox="0 0 7 10"><path d="M0.5 0.5h3.6l2.2 2.2v6.8h-5.8z" fill="#fafafa" stroke="#b0b0b0" stroke-width="1"/></svg>
<svg class="ic" style="left:751.6px;top:3.8px" width="18" height="11" viewBox="0 0 18 11"><path d="M0.6 0.6h4.4l2.4 2.4v7h-6.8z" fill="#fafafa" stroke="#2f8fd0" stroke-width="1.3"/><path d="M10 0.6h4.4l2.4 2.4v7h-6.8z" fill="#fafafa" stroke="#2f8fd0" stroke-width="1.3"/></svg>
<svg class="ic" style="left:775.0px;top:3.6px" width="16" height="11.4" viewBox="0 0 16 11.4"><path d="M8 2.6c-1.6-1.6-4.4-2-7.4-1.6v8.4c3-.4 5.8 0 7.4 1.2c1.6-1.2 4.4-1.600 7.400-1.200v-8.400c-3-.4-5.800 0-7.400 1.600v8" fill="#fafafa" stroke="#8a8a8a" stroke-width="1"/></svg>
<i class="s" style="left:798.3px"></i>
<i class="sep" style="left:809.4px;top:9.4px;width:5.6px;height:1.3px;background:#444"></i>
<i class="sep" style="left:822.4px;top:9.6px;width:95px;height:1px;background:#8a8a8a"></i>
<i class="sep" style="left:830.8px;top:5.6px;width:1px;height:9px;background:#8a8a8a"></i>
<i style="position:absolute;left:865.2px;top:6.4px;width:7px;height:7px;border:1.2px solid #444;border-radius:50%;background:#f6f6f6;box-sizing:border-box"></i>
<svg class="ic" style="left:922.0px;top:6.4px" width="7" height="7" viewBox="0 0 7 7"><path d="M3.5 0v7M0 3.500h7" stroke="#444" stroke-width="1.3"/></svg>
<i class="s" style="left:936.0px"></i>
<span style="left:944px;transform:scaleX(.915)">100%</span>
</div>
</body></html>
